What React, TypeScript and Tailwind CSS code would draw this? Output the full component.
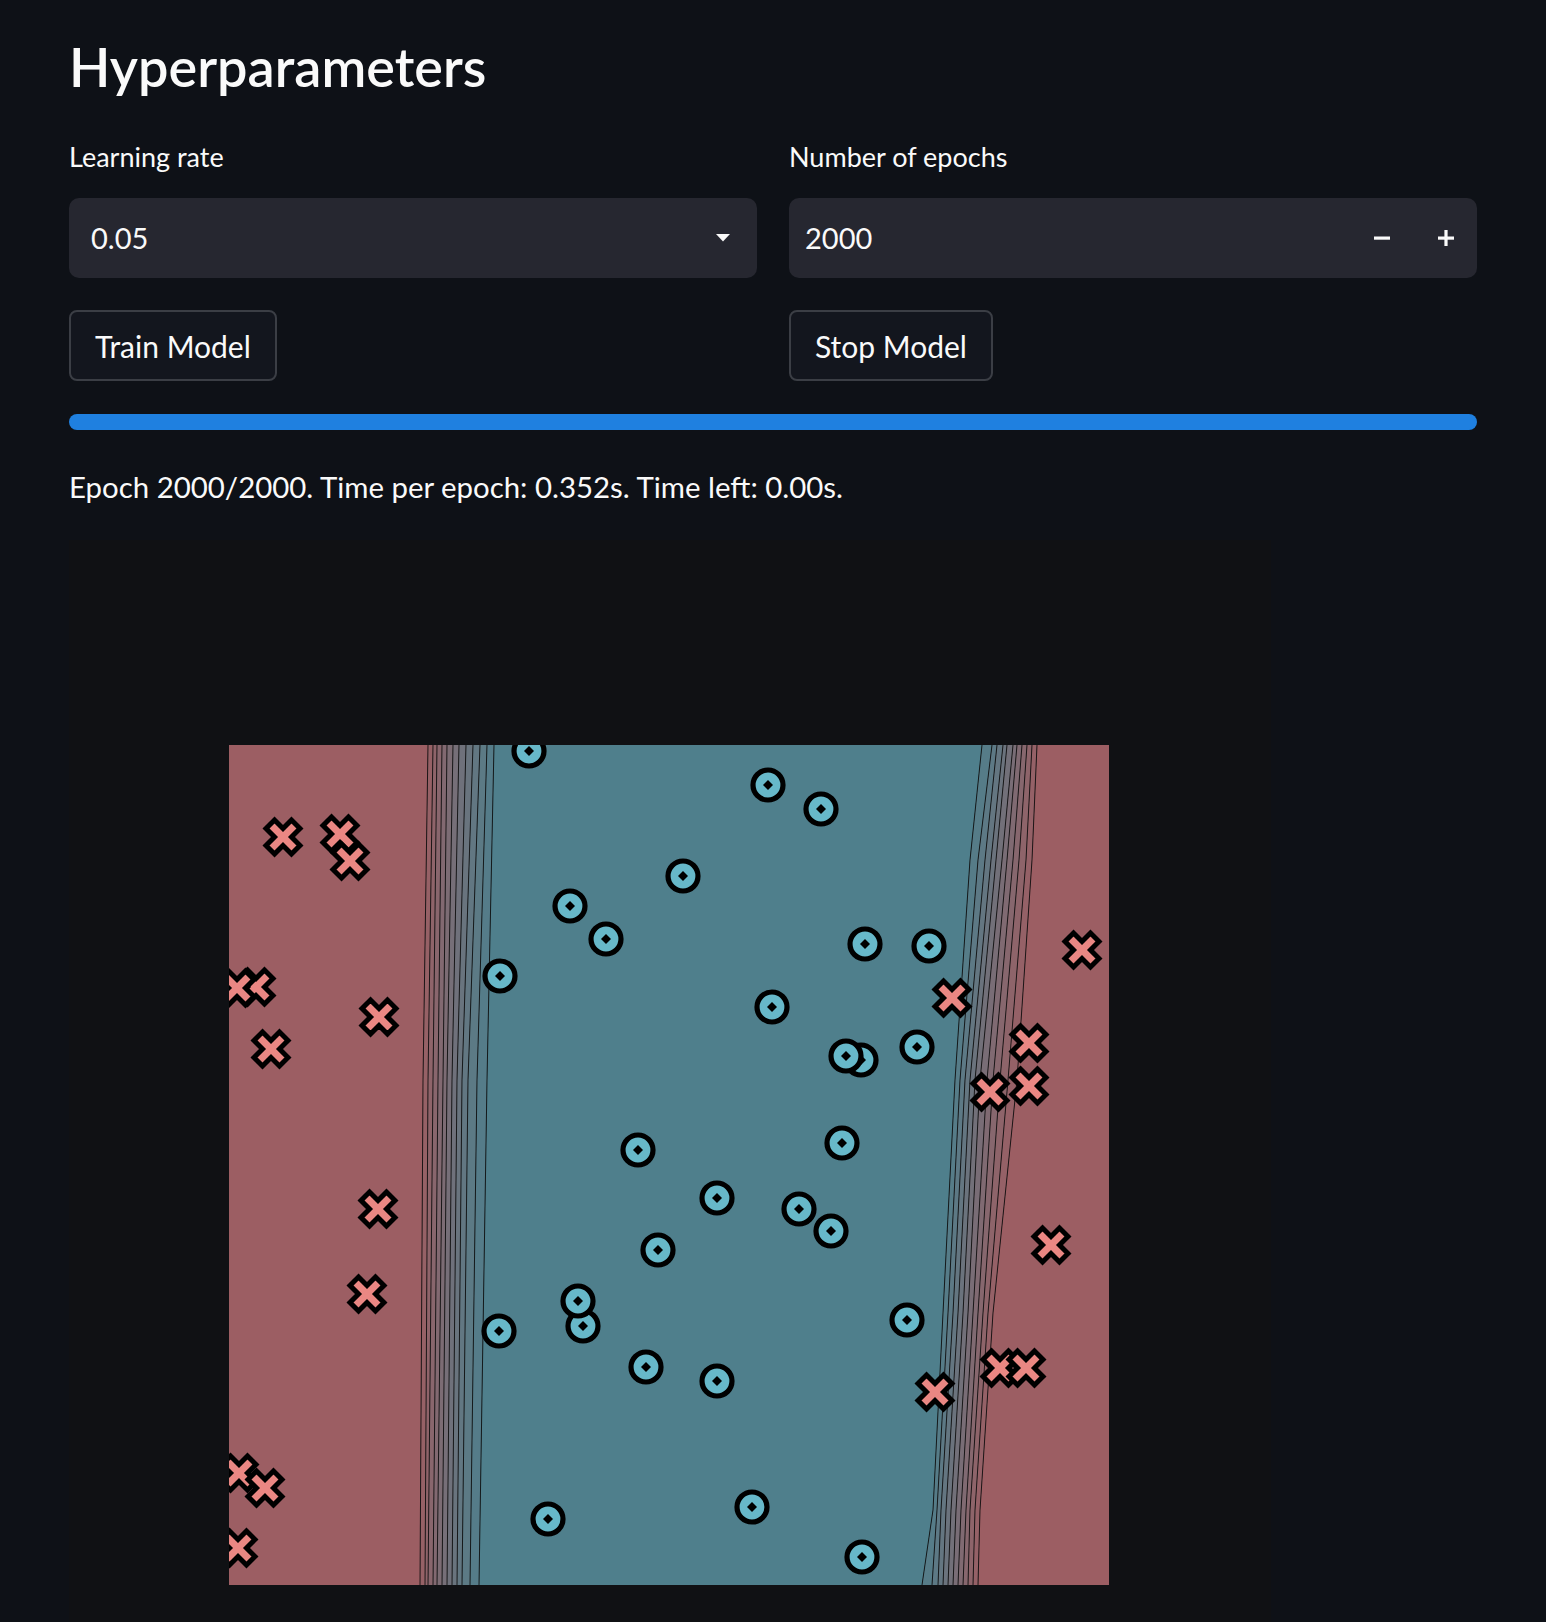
import React from 'react';

// ── plot data (plot-local pixels, 880 x 840) ───────────────────────────────────

const PLOT_W = 880;
const PLOT_H = 840;

const RED: [number, number, number] = [156, 94, 99];
const BLUE: [number, number, number] = [79, 127, 140];

// left decision boundary: x at y = 0 / 335 / 840
const LEFT_Y = [0, 335, 840];
const LEFT_LINES = [
  [199, 194, 191],
  [204, 199, 196],
  [208, 204, 199],
  [213, 209, 204],
  [218, 214, 208],
  [224, 218, 213],
  [230, 223, 218],
  [237, 228, 223],
  [244, 233, 228],
  [251, 239, 233],
  [258, 248, 241],
  [265, 258, 250],
];

// right decision boundary: x at each y stop
const RIGHT_Y = [0, 115, 335, 568, 765, 840];
const RIGHT_LINES = [
  [753, 741, 726, 714, 704, 693],
  [763, 749, 731, 719, 708, 703],
  [768, 756, 736, 724, 712, 709],
  [774, 762, 741, 729, 717, 714],
  [778, 767, 746, 734, 722, 719],
  [784, 773, 751, 739, 727, 724],
  [788, 778, 758, 744, 732, 729],
  [793, 784, 764, 749, 737, 734],
  [798, 790, 771, 754, 741, 739],
  [803, 797, 779, 759, 746, 744],
  [808, 803, 788, 764, 751, 749],
];

// page coords, shifted to plot-local below
const CIRCLES: [number, number][] = [
  [529, 751], [570, 906], [606, 939], [500, 976], [768, 785], [821, 809],
  [683, 876], [865, 944], [929, 946], [772, 1007], [861, 1060], [846, 1056],
  [917, 1047], [638, 1150], [842, 1143], [717, 1198], [799, 1209], [831, 1231],
  [658, 1250], [907, 1320], [646, 1367], [717, 1381], [752, 1507], [862, 1557],
  [499, 1331], [583, 1326], [578, 1301], [548, 1519],
];

const CROSSES: [number, number][] = [
  [283, 837], [340, 834], [350, 861], [256, 987], [237, 988], [379, 1017],
  [271, 1049], [1082, 950], [952, 998], [1029, 1086], [1029, 1043], [990, 1092],
  [378, 1209], [367, 1294], [1051, 1245], [1000, 1368], [1026, 1368], [935, 1392],
  [239, 1473], [265, 1488], [238, 1548],
];

const PLOT_X0 = 229;
const PLOT_Y0 = 745;

const PLUS = '-6,-18 6,-18 6,-6 18,-6 18,6 6,6 6,18 -6,18 -6,6 -18,6 -18,-6 -6,-6';

function mix(a: number[], b: number[], t: number) {
  const c = a.map((v, i) => Math.round(v + (b[i] - v) * t));
  return `rgb(${c[0]},${c[1]},${c[2]})`;
}

function pts(xs: number[], ys: number[]): [number, number][] {
  return xs.map((x, i) => [x, ys[i]]);
}

function toStr(p: [number, number][]) {
  return p.map(([x, y]) => `${x},${y}`).join(' ');
}

function band(a: [number, number][], b: [number, number][]) {
  return toStr([...a, ...[...b].reverse()]);
}

// ── chart ─────────────────────────────────────────────────────────────────────

function DecisionPlot() {
  const left = LEFT_LINES.map((l) => pts(l, LEFT_Y));
  const right = RIGHT_LINES.map((l) => pts(l, RIGHT_Y));

  return (
    <svg width={PLOT_W} height={PLOT_H} viewBox={`0 0 ${PLOT_W} ${PLOT_H}`} className="block">
      {/* filled regions */}
      <polygon points={toStr([[0, 0], ...left[0], [0, PLOT_H]])} fill={mix(RED, BLUE, 0)} />
      {left.slice(0, -1).map((l, k) => (
        <polygon key={`lb${k}`} points={band(l, left[k + 1])} fill={mix(RED, BLUE, (k + 1) / 12)} />
      ))}
      <polygon points={band(left[left.length - 1], right[0])} fill={mix(BLUE, RED, 0)} />
      {right.slice(0, -1).map((l, k) => (
        <polygon key={`rb${k}`} points={band(l, right[k + 1])} fill={mix(BLUE, RED, (k + 1) / 11)} />
      ))}
      <polygon
        points={toStr([...right[right.length - 1], [PLOT_W, PLOT_H], [PLOT_W, 0]])}
        fill={mix(BLUE, RED, 1)}
      />

      {/* contour lines */}
      {[...left, ...right].map((l, i) => (
        <polyline key={`cl${i}`} points={toStr(l)} fill="none" stroke="#0d0d0d" strokeOpacity={0.85} strokeWidth={1} />
      ))}

      {/* class 0 */}
      {CIRCLES.map(([x, y], i) => (
        <g key={`c${i}`} transform={`translate(${x - PLOT_X0} ${y - PLOT_Y0})`}>
          <circle r={15} fill="#67b8c9" stroke="#000" strokeWidth={5.2} />
          <polygon points="0,-5 5,0 0,5 -5,0" fill="#000" />
        </g>
      ))}

      {/* class 1 */}
      {CROSSES.map(([x, y], i) => (
        <polygon
          key={`x${i}`}
          points={PLUS}
          transform={`translate(${x - PLOT_X0} ${y - PLOT_Y0}) rotate(45)`}
          fill="#ea8783"
          stroke="#000"
          strokeWidth={5}
          strokeLinejoin="miter"
        />
      ))}
    </svg>
  );
}

// ── page ──────────────────────────────────────────────────────────────────────

export default function App() {
  return (
    <div className="min-h-screen bg-[#0e1117] text-[#fafafa] font-[Lato,sans-serif] overflow-hidden">
      <div className="pl-[69px] pr-[69px]">
        <h2 className="pt-[35px] text-[54px] leading-[64px] font-semibold">Hyperparameters</h2>

        <div className="grid grid-cols-2 gap-x-[32px]">
          {/* learning rate */}
          <div>
            <div className="mt-[40px] text-[27px] leading-[36px]">Learning rate</div>
            <div className="mt-[23px] h-[80px] rounded-[10px] bg-[#262730] flex items-center pl-[22px] pr-[27px]">
              <span className="text-[29px] leading-[40px]">0.05</span>
              <svg className="ml-auto" width="14" height="8" viewBox="0 0 14 8">
                <polygon points="0,0 14,0 7,7.5" fill="#fafafa" />
              </svg>
            </div>
            <button className="mt-[32px] h-[71px] px-[24px] rounded-[8px] border-2 border-[#3b3e45] bg-[#13161e] text-[30px] leading-[40px]">
              Train Model
            </button>
          </div>

          {/* epochs */}
          <div>
            <div className="mt-[40px] text-[27px] leading-[36px]">Number of epochs</div>
            <div className="mt-[23px] h-[80px] rounded-[10px] bg-[#262730] flex items-center pl-[16px]">
              <span className="text-[29px] leading-[40px]">2000</span>
              <div className="ml-auto flex items-center h-full">
                <div className="w-[64px] h-full flex items-center justify-center">
                  <svg width="18" height="18" viewBox="0 0 18 18">
                    <rect x="1" y="7.5" width="16" height="3.2" fill="#fafafa" />
                  </svg>
                </div>
                <div className="w-[64px] h-full flex items-center justify-center mr-[-1px]">
                  <svg width="18" height="18" viewBox="0 0 18 18">
                    <rect x="1" y="7.5" width="16" height="3.2" fill="#fafafa" />
                    <rect x="7.4" y="1" width="3.2" height="16" fill="#fafafa" />
                  </svg>
                </div>
              </div>
            </div>
            <button className="mt-[32px] h-[71px] px-[24px] rounded-[8px] border-2 border-[#3b3e45] bg-[#13161e] text-[30px] leading-[40px]">
              Stop Model
            </button>
          </div>
        </div>

        {/* progress */}
        <div className="mt-[33px] h-[16px] rounded-full bg-[#1f80e0]" />

        <p className="mt-[37px] text-[29.4px] leading-[40px]">
          Epoch 2000/2000. Time per epoch: 0.352s. Time left: 0.00s.
        </p>
      </div>

      {/* matplotlib figure */}
      <div className="ml-[69px] mt-[33px] w-[1202px] h-[1082px] bg-[#101114] pl-[160px] pt-[205px]">
        <DecisionPlot />
      </div>
    </div>
  );
}
